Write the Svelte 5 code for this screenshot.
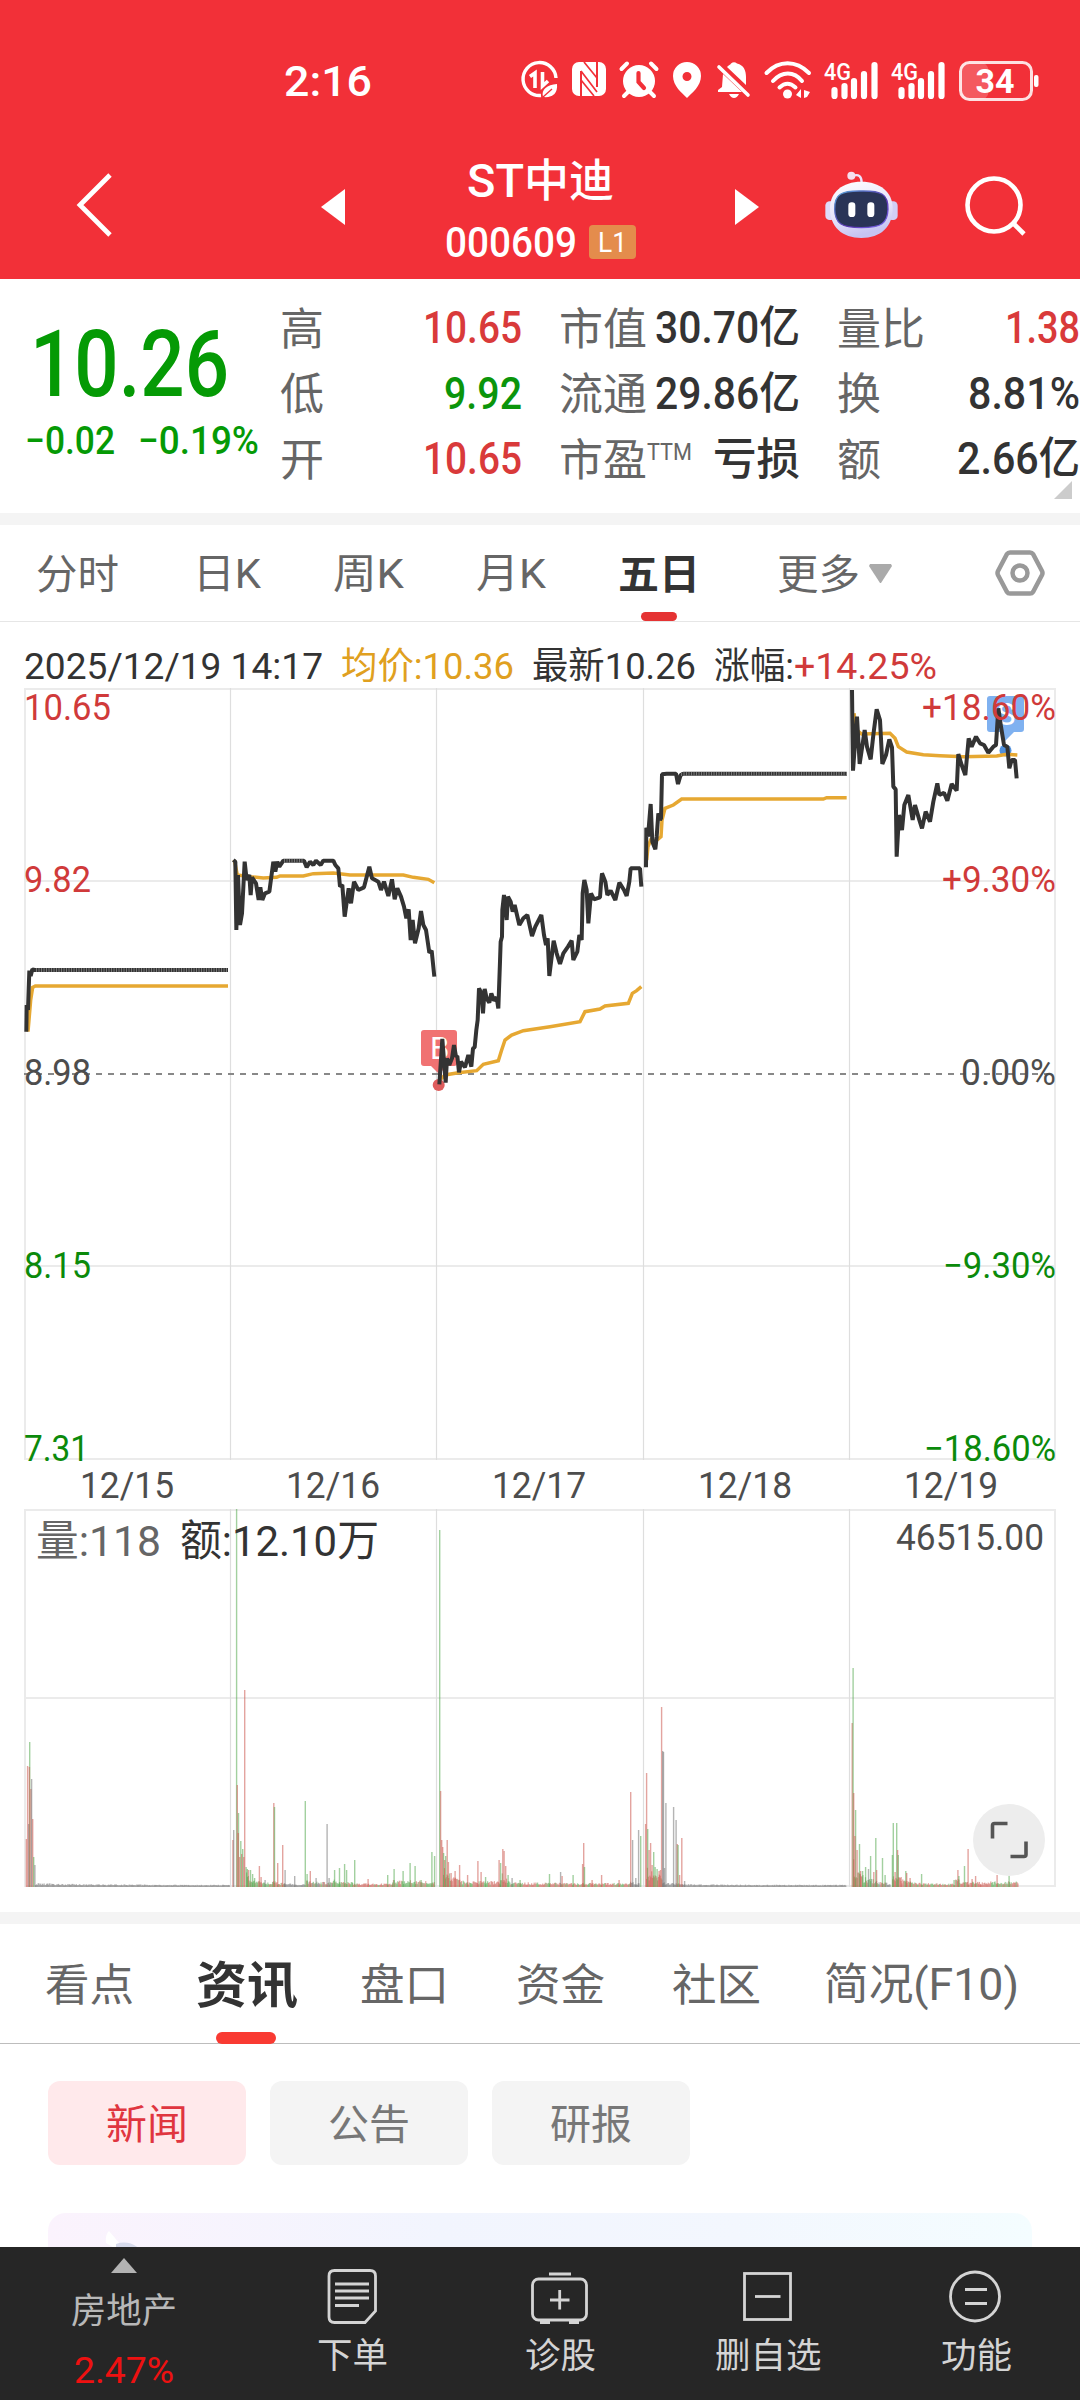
<script>
  const stats = [
    [
      { label: '高', value: '10.65', w: 99, tone: 'up' },
      { label: '低', value: '9.92', w: 78, tone: 'down' },
      { label: '开', value: '10.65', w: 99, tone: 'up' },
    ],
    [
      { label: '市值', value: '30.70亿', w: 145, tone: 'ink' },
      { label: '流通', value: '29.86亿', w: 145, tone: 'ink' },
      { label: '市盈', sup: 'TTM', value: '亏损', w: 87, tone: 'ink' },
    ],
    [
      { label: '量比', value: '1.38', w: 75, tone: 'up' },
      { label: '换', value: '8.81%', w: 112, tone: 'ink' },
      { label: '额', value: '2.66亿', w: 123, tone: 'ink' },
    ],
  ];

  const periods = [
    { text: '分时', w: 83, at: 'p0' },
    { text: '日K', w: 68, at: 'p1' },
    { text: '周K', w: 71, at: 'p2' },
    { text: '月K', w: 70, at: 'p3' },
    { text: '五日', w: 82, at: 'p4', active: true },
    { text: '更多', w: 83, at: 'p5', more: true },
  ];

  const sections = [
    { text: '看点', w: 89 },
    { text: '资讯', w: 102, active: true },
    { text: '盘口', w: 89 },
    { text: '资金', w: 89 },
    { text: '社区', w: 89 },
    { text: '简况(F10)', w: 195 },
  ];

  const chips = [{ text: '新闻', active: true }, { text: '公告' }, { text: '研报' }];
  const actions = [
    { text: '下单', icon: 'order' },
    { text: '诊股', icon: 'diagnose' },
    { text: '删自选', icon: 'remove' },
    { text: '功能', icon: 'menu' },
  ];

  // Intraday series, each in thirds of a pixel from its own origin
  const third = 1 / 3;
  const days = [
    {
      x: 0, y: 630,
      price: '79,1205 80,1125 84,1140 88,1022 92,1038 97,1018 104,1020 684,1020',
      avg: '84,1205 92,1110 98,1072 106,1068 684,1068',
    },
    {
      x: 0, y: 630,
      price: '700,690 706,695 709,900 714,735 720,885 726,850 734,695 740,750 748,735 752,795 756,742 768,760 776,810 781,772 787,810 795,790 808,785 820,695 826,725 832,695 838,710 850,692 912,692 920,712 930,695 940,705 948,692 962,705 970,692 1000,692 1006,705 1015,715 1020,770 1027,765 1034,860 1046,775 1053,820 1062,755 1075,780 1092,772 1108,710 1116,745 1135,755 1143,780 1152,755 1165,798 1176,748 1184,808 1192,775 1203,800 1212,830 1219,865 1226,838 1232,930 1238,870 1245,940 1256,895 1263,843 1270,885 1278,900 1288,968 1295,962 1303,1040',
      avg: '703,690 712,735 750,740 790,744 830,742 840,738 910,738 940,731 1000,729 1050,735 1210,735 1240,742 1285,748 1303,758',
    },
    {
      x: 400, y: 660,
      price: '118,1273 127,1137 137,1268 141,1195 148,1215 156,1195 162,1155 168,1190 172,1188 177,1237 183,1205 195,1222 205,1185 214,1220 219,1165 224,1162 229,1110 233,1080 237,985 245,1000 249,1060 254,987 260,1015 268,1028 274,1000 282,1022 290,1012 295,1045 300,905 302,845 306,830 307,750 312,705 320,780 324,710 332,725 338,755 344,735 358,795 370,775 382,765 396,828 406,800 424,765 432,825 438,855 443,835 448,948 461,842 470,880 480,912 490,880 504,860 515,842 520,900 532,875 538,825 545,840 548,700 553,660 560,690 565,790 573,700 582,718 600,712 603,670 606,640 616,665 622,705 632,692 646,720 658,668 672,690 680,708 688,665 692,625 720,625 724,680',
      avg: '122,1258 135,1245 175,1238 230,1232 250,1213 295,1202 305,1170 315,1140 335,1125 370,1112 450,1100 540,1085 555,1055 600,1047 615,1038 685,1030 697,1000 710,992 724,980',
    },
    {
      x: 400, y: 660,
      price: '738,622 739,503 744,530 752,432 757,545 766,568 770,530 775,460 780,480 783,475 786,343 800,341 828,341 834,372 842,345 850,341 1340,341',
      avg: '740,600 744,560 752,540 765,545 783,530 786,480 795,445 820,435 845,417 1270,417 1280,413 1340,413',
    },
    {
      x: 780, y: 630,
      price: '216,180 219,422 231,260 239,402 254,300 261,350 272,388 280,315 290,238 300,270 307,402 318,375 328,328 336,352 340,470 347,478 350,680 357,555 366,600 373,525 385,495 398,570 405,525 418,570 426,595 437,545 450,575 460,515 472,460 478,495 492,488 502,512 515,462 530,482 535,372 545,405 556,435 566,325 575,350 588,320 600,340 612,345 625,368 640,350 648,345 655,235 663,290 672,345 682,350 688,415 695,390 705,390 710,445',
      avg: '222,250 230,300 245,312 330,310 345,325 355,350 380,366 430,374 480,377 550,380 650,378 680,373 712,375',
    },
  ];
  const flats = [[36, 227, 970], [284, 303, 861], [681, 847, 774]];

  // Volume bars: [x, height, colour]; r = up, g = down, k = unchanged
  const peaks = [
    [26.3, 48, 'r'], [27.5, 121, 'r'], [28.6, 63, 'k'], [29.6, 145, 'g'], [29.3, 120, 'r'], [30.8, 98, 'r'], [31.5, 108, 'k'], [32.6, 68, 'r'], [33.6, 30, 'g'], [34.8, 22, 'k'],
    [232.8, 47, 'r'], [233.6, 57, 'k'], [236.5, 378, 'g'], [237.2, 102, 'r'], [238.4, 74, 'g'], [238.2, 54, 'r'], [239.6, 30, 'r'], [240.7, 46, 'g'], [241.6, 33, 'r'], [242.6, 38, 'g'], [243.7, 30, 'r'],
    [244.6, 197, 'r'], [246, 20, 'g'], [247.2, 18, 'g'], [248.4, 17, 'r'], [250.4, 17, 'g'], [252.5, 13, 'g'], [254.5, 9, 'g'], [259.3, 21, 'r'], [261, 10, 'r'], [265, 7, 'k'],
    [273.7, 84, 'r'], [274.4, 80, 'g'], [277.6, 24, 'r'], [282.6, 42, 'r'], [285, 17, 'k'], [294.6, 11, 'k'], [305.2, 86, 'g'], [307, 13, 'g'], [310.2, 16, 'r'], [316, 9, 'k'], [327, 63, 'k'], [329, 9, 'k'],
    [334.5, 17, 'g'], [339.4, 19, 'g'], [344.5, 23, 'g'], [346.5, 17, 'g'], [354.6, 27, 'g'], [368, 8, 'r'], [387.6, 12, 'g'], [394, 18, 'g'], [403, 16, 'g'], [410, 24, 'g'], [415, 21, 'g'], [421, 7, 'g'], [431.8, 35, 'g'], [434.5, 31, 'g'],
    [439.6, 357, 'g'], [440.5, 96, 'r'], [441.6, 47, 'r'], [442.6, 40, 'r'], [443.5, 34, 'g'], [444.5, 27, 'r'], [445.6, 31, 'g'], [447.1, 47, 'r'], [448.3, 25, 'r'], [451, 14, 'r'], [455, 16, 'r'], [459.5, 22, 'r'], [467.5, 12, 'r'],
    [477.8, 26, 'r'], [481, 15, 'r'], [485.5, 10, 'g'], [499, 27, 'r'], [500.5, 24, 'g'], [502.7, 38, 'r'], [504, 36, 'r'], [505.6, 21, 'r'], [508, 12, 'g'], [512, 9, 'k'], [520, 7, 'g'],
    [549.4, 13, 'g'], [560.5, 15, 'k'], [562, 11, 'r'], [573, 12, 'g'], [582.5, 23, 'r'], [583.6, 44, 'r'], [584.4, 20, 'g'], [592, 7, 'r'], [601.5, 12, 'r'], [619, 7, 'r'], [630.6, 95, 'r'], [632.5, 47, 'k'], [635.7, 9, 'k'], [638.5, 57, 'k'], [640.6, 51, 'g'],
    [645.5, 63, 'r'], [646.5, 114, 'r'], [647.6, 58, 'g'], [649, 37, 'r'], [650.5, 44, 'r'], [652, 22, 'r'], [653.6, 35, 'g'], [655, 20, 'g'], [657, 18, 'g'], [659, 16, 'r'], [660.4, 17, 'r'], [661.5, 180, 'r'], [662.6, 136, 'k'], [663.4, 135, 'k'], [665.8, 84, 'k'], [664.4, 19, 'k'],
    [673.5, 80, 'k'], [676, 67, 'k'], [677.2, 43, 'r'], [678, 42, 'g'], [679.5, 12, 'r'], [681.7, 49, 'r'], [684.5, 6, 'k'],
    [852.1, 164, 'r'], [853, 219, 'g'], [853.6, 94, 'r'], [855.5, 77, 'g'], [854.8, 51, 'r'], [857, 37, 'r'], [859.4, 43, 'g'], [860.5, 16, 'r'], [862.5, 16, 'g'], [865.5, 20, 'g'], [868.4, 18, 'k'], [870.5, 31, 'g'], [873.7, 15, 'r'], [875.7, 49, 'g'], [876.5, 17, 'r'], [882.4, 29, 'g'], [885, 12, 'g'],
    [893.2, 64, 'g'], [892.3, 32, 'g'], [896.6, 64, 'g'], [897.5, 37, 'r'], [898.2, 32, 'g'], [895, 15, 'r'], [901, 10, 'r'], [905.7, 16, 'g'], [906.6, 14, 'r'], [910, 9, 'r'], [921.5, 13, 'g'], [954, 7, 'g'], [957.8, 17, 'r'], [958.8, 11, 'g'], [964.4, 21, 'g'], [968, 38, 'r'], [972, 8, 'r'], [975.5, 11, 'r'], [997, 12, 'r'], [1009, 11, 'g'],
  ];

  let seed = 19;
  const rand = () => (seed = (seed * 16807) % 2147483647) / 2147483647;
  // Low trading between the peaks: [from, to, starting height, base height, colours]
  const floors = [
    [35, 229, 3, 1.2, 'kkk'], [246, 272, 16, 3, 'ggr'], [272, 284, 7, 3, 'rrg'], [284, 305, 3, 2, 'kk'], [306, 332, 6, 4, 'kgr'], [332, 352, 9, 4, 'ggr'], [352, 392, 3, 2.5, 'rrg'], [392, 434, 6, 6, 'ggr'],
    [443, 470, 24, 4, 'rrg'], [470, 500, 5, 5, 'rrg'], [500, 520, 16, 3, 'rgg'], [520, 630, 4, 3, 'rrg'], [630, 639, 5, 4, 'k'],
    [646, 662, 22, 12, 'rrg'], [662, 682, 4, 3, 'k'], [682, 846, 2, 1.2, 'k'], [853, 870, 30, 8, 'rrg'], [870, 890, 10, 3, 'rgk'], [892, 910, 16, 6, 'rrg'], [910, 955, 4, 2.5, 'rrg'], [955, 980, 8, 4, 'rrg'], [980, 1018, 4, 5, 'rgr'],
  ];
  const low = floors.flatMap(([a, b, h0, h1, c]) => {
    const out = [];
    for (let x = a; x < b; x += 0.85) {
      const decay = Math.exp((-3.5 * (x - a)) / (b - a));
      const h = 1 + (h1 + (h0 - h1) * decay) * (0.3 + rand() * 0.7);
      out.push([x, h, c[Math.floor(rand() * c.length)]]);
    }
    return out;
  });

  const gridX = [230, 436, 643, 849];
  const leftScale = [['10.65', 720, 87, 'up'], ['9.82', 892, 67, 'up'], ['8.98', 1085, 67, 'mid'], ['8.15', 1278, 67, 'down'], ['7.31', 1461, 65, 'down']];
  const rightScale = [['+18.60%', 720, 134, 'up'], ['+9.30%', 892, 114, 'up'], ['0.00%', 1085, 95, 'mid'], ['−9.30%', 1278, 113, 'down'], ['−18.60%', 1461, 132, 'down']];
  const dates = ['12/15', '12/16', '12/17', '12/18', '12/19'];

  const isHan = (s) => /^[\u4e00-\u9fff]+$/.test(s);
  const boxHeight = (s, size) => Math.round(size * (isHan(s) ? 0.76 : 0.711));
</script>

{#snippet fit(text, w, size)}
  {@const h = boxHeight(text, size)}
  <svg class="fit" width={w} height={h}>
    <text x="0" y={h} font-size={size} textLength={w} lengthAdjust="spacingAndGlyphs">{text}</text>
  </svg>
{/snippet}

{#snippet signal()}
  <svg width="56" height="38" viewBox="0 0 56 38">
    <text class="g4" x="0" y="19" font-size="24" textLength="27" lengthAdjust="spacingAndGlyphs">4G</text>
    <path d="M10.500 29V35M20.500 25V35M30 20V35M40 13V35M50.500 4V35" stroke="#fff" stroke-width="6.200" stroke-linecap="round" />
  </svg>
{/snippet}

<main class="page">
  <header>
    <div class="status">
      <div class="clock">{@render fit('2:16', 88, 42)}</div>
      <div class="tray">
        <svg class="saver" width="38" height="38" viewBox="0 0 38 38" fill="none" stroke="#fff">
          <path d="M35 17A16.500 16.500 0 1 0 20 34.500" stroke-width="3.400" />
          <path d="M9 15.500L14 12V27M21.500 11V25L27 20" stroke-width="3.600" />
          <path d="M22 36C20 28 26 24 36 23C37 33 31 37 22 36Z" fill="#fff" stroke="none" />
          <path d="M22 36L31 28" stroke="#f23038" stroke-width="1.400" />
        </svg>
        <svg class="nfc" width="35" height="36" viewBox="0 0 35 36">
          <rect x="0" y="1" width="34" height="34" rx="7" fill="#fff" />
          <path d="M9 10V35M25 1V26" stroke="#f23038" stroke-width="2" />
          <path d="M9 10L25 31M9 19L22 35M12 1L25 17" stroke="#f23038" stroke-width="1.700" />
        </svg>
        <svg class="alarm" width="40" height="38" viewBox="0 0 40 38" fill="none" stroke-linecap="round">
          <circle cx="20" cy="20" r="16" fill="#fff" />
          <path d="M2.500 8L8 2.500M37.500 8L32 2.500M5 35L10 30M35 35L30 30" stroke="#fff" stroke-width="4" />
          <path d="M19.500 12V21L25 27" stroke="#f23038" stroke-width="4.200" />
        </svg>
        <svg class="pin" width="30" height="38" viewBox="0 0 30 38">
          <path d="M15 1A14 14 0 0 0 1 15C1 25 10 32 15 37C20 32 29 25 29 15A14 14 0 0 0 15 1ZM15 11A4.500 4.500 0 1 1 15 20A4.500 4.500 0 1 1 15 11Z" fill="#fff" fill-rule="evenodd" />
        </svg>
        <svg class="bell" width="34" height="38" viewBox="0 0 34 38">
          <path d="M6 13L25 31H1V29L5 26ZM10 6C12 4 13 4 14 2.500Q17 0 20 2.500C27 4 29 10 29 16V24Z" fill="#fff" />
          <path d="M12 33H22Q20 37 17 37T12 33Z" fill="#fff" />
          <path d="M2 6L31 34" stroke="#fff" stroke-width="3.600" stroke-linecap="round" />
        </svg>
        <svg class="wifi" width="48" height="38" viewBox="0 0 48 38" fill="none" stroke="#fff" stroke-width="4" stroke-linecap="round">
          <path d="M2.500 12C15-1 32-1 45 12M9 20C18 10 30 10 38 20M15.500 26.500Q23.500 19 31.500 26.500" />
          <circle cx="23.500" cy="33" r="4.500" fill="#fff" stroke="none" />
          <path d="M32 34L37 28V37M40 37V29L46 31L43 36Z" fill="#fff" stroke="none" />
        </svg>
        {@render signal()}
        <span class="second">{@render signal()}</span>
        <svg class="battery" width="80" height="42" viewBox="0 0 80 42">
          <rect x="1.500" y="1.500" width="28" height="37" rx="8" fill="#fff" fill-opacity=".2" />
          <rect x="1.500" y="1.500" width="71" height="37" rx="9" fill="none" stroke="#fff" stroke-opacity=".85" stroke-width="3" />
          <rect x="75" y="14" width="4.500" height="12" rx="2" fill="#fff" />
          <text class="pct" x="16.500" y="32" font-size="34" textLength="39" lengthAdjust="spacingAndGlyphs">34</text>
        </svg>
      </div>
    </div>

    <div class="titlebar">
      <svg class="back" width="40" height="68" viewBox="0 0 40 68"><path d="M34 4L4 34L34 64" fill="none" stroke="#fff" stroke-width="4.800" /></svg>
      <svg class="prev" width="24" height="36" viewBox="0 0 24 36"><path d="M24 0V36L0 18Z" fill="#fff" /></svg>
      <div class="stock">
        <div class="name">{@render fit('ST', 57, 47)}{@render fit('中迪', 90, 45)}</div>
        <div class="code">{@render fit('000609', 132, 42)}<span class="level">{@render fit('L1', 29, 28)}</span></div>
      </div>
      <svg class="next" width="24" height="36" viewBox="0 0 24 36"><path d="M0 0V36L24 18Z" fill="#fff" /></svg>
      <svg class="robot" width="73" height="68" viewBox="74 31 219 204">
        <defs>
          <linearGradient id="shell" x1="0" y1="0" x2="0.300" y2="1"><stop offset="0" stop-color="#fff" /><stop offset="0.650" stop-color="#e6e2fa" /><stop offset="1" stop-color="#c6c4f2" /></linearGradient>
          <linearGradient id="rim" x1="0" y1="0" x2="1" y2="1"><stop offset="0" stop-color="#59a7d8" /><stop offset="0.600" stop-color="#5b34b0" /><stop offset="1" stop-color="#7c6cf2" /></linearGradient>
        </defs>
        <path d="M156 46C176 38 184 48 184 66" fill="none" stroke="#ece4fb" stroke-width="7" />
        <circle cx="153" cy="45" r="12" fill="#f6dfee" />
        <rect x="75" y="122" width="30" height="56" rx="13" fill="#dedafa" />
        <rect x="262" y="122" width="30" height="56" rx="13" fill="#d2cef6" />
        <path d="M183 63C240 63 276 95 277 140C278 200 240 232 183 232C126 232 88 200 89 140C90 95 126 63 183 63Z" fill="url(#shell)" />
        <path d="M183 91C243 90 264 100 263 146C262 188 243 201 183 201C123 201 104 188 103 146C102 100 123 90 183 91Z" fill="#2a3457" stroke="url(#rim)" stroke-width="4" />
        <rect x="144" y="125" width="21" height="44" rx="10" fill="#fff" />
        <rect x="201" y="125" width="21" height="44" rx="10" fill="#fff" />
      </svg>
      <svg class="search" width="62" height="62" viewBox="0 0 62 62" fill="none" stroke="#fff" stroke-width="4.600"><circle cx="29" cy="29" r="26.500" /><path d="M48 47L59 58" /></svg>
    </div>
  </header>

  <section class="quote">
    <div class="last">
      <div class="price">{@render fit('10.26', 199, 93)}</div>
      <div class="change">{@render fit('−0.02', 90, 39)}{@render fit('−0.19%', 121, 39)}</div>
    </div>
    {#each stats as column}
      <div class="column">
        {#each column as s}
          <div class="stat">
            <span class="label">
              {@render fit(s.label, s.label.length * 44, 44.500)}
              {#if s.sup}<span class="sup">{@render fit(s.sup, 45, 24)}</span>{/if}
            </span>
            <span class={s.tone}>{@render fit(s.value, s.w, 44)}</span>
          </div>
        {/each}
      </div>
    {/each}
    <svg class="corner" width="18" height="18" viewBox="0 0 18 18"><path d="M18 0V18H0Z" fill="#ccc" /></svg>
  </section>

  <nav class="periods">
    {#each periods as p}
      <div class="period {p.at}" class:active={p.active}>
        {@render fit(p.text, p.w, 41)}
        {#if p.more}<svg class="drop" width="23" height="19" viewBox="0 0 23 19"><path d="M1 0H22L23 2L12 19H11L0 2Z" fill="#aaa" /></svg>{/if}
      </div>
    {/each}
    <svg class="hex" width="50" height="46" viewBox="0 0 50 46" fill="none" stroke="#999" stroke-width="4.500"><path d="M15 2.500H35Q37 2.500 38 4L47 21Q48 23 47 25L38 42Q37 43.500 35 43.500H15Q13 43.500 12 42L3 25Q2 23 3 21L12 4Q13 2.500 15 2.500Z" /><circle cx="25" cy="23" r="7.500" /></svg>
  </nav>

  <section class="chart">
    <svg class="plot" width="1080" height="1290" viewBox="0 622 1080 1290">
      <g class="info" font-size="37">
        <text x="24" y="679" textLength="299" lengthAdjust="spacingAndGlyphs">2025/12/19 14:17</text>
        <text class="gold" x="341" y="679" textLength="173" lengthAdjust="spacingAndGlyphs">均价:10.36</text>
        <text x="532" y="679" textLength="164" lengthAdjust="spacingAndGlyphs">最新10.26</text>
        <text x="714" y="679" textLength="80" lengthAdjust="spacingAndGlyphs">涨幅:</text>
        <text class="up" x="794" y="679" textLength="143" lengthAdjust="spacingAndGlyphs">+14.25%</text>
      </g>

      <g class="grid">
        <path d="M24 689H1056M24 881H1056M24 1266H1056M24 1459H1056M25 688V1460M1055 688V1460" />
        <path d="M24 1510H1056M24 1698H1056M24 1886H1056M25 1509V1887M1055 1509V1887" />
        {#each gridX as x}<path class="thin" d="M{x + 0.5} 688V1460M{x + 0.5} 1509V1887" />{/each}
      </g>
      <path d="M24 1074H1056" stroke="#888" stroke-width="2" stroke-dasharray="6 6" />

      <g>
        <path d="M424 1030H454Q457 1030 457 1033V1063Q457 1066 454 1066H447L439 1074L431 1066H424Q421 1066 421 1063V1033Q421 1030 424 1030Z" fill="#f07272" />
        <text class="tag" x="430" y="1059" font-size="31">B</text>
        <circle cx="438.700" cy="1085" r="6" fill="#de5c5c" />
        <path d="M990 696H1021Q1024 696 1024 699V729Q1024 732 1021 732H1014L1003 743V732H990Q987 732 987 729V699Q987 696 990 696Z" fill="#7fb1f0" />
        <text class="tag" x="997" y="725" font-size="31">S</text>
        <circle cx="1005.500" cy="750.500" r="6" fill="#5090dc" />
      </g>

      {#each days as d}
        <g transform="translate({d.x} {d.y}) scale({third})" fill="none">
          <polyline points={d.avg} stroke="#e6a832" stroke-width="10.500" />
          <polyline points={d.price} stroke="#333" stroke-width="12" stroke-linejoin="bevel" />
        </g>
      {/each}
      {#each flats as [a, b, y]}<path d="M{a} {y}H{b}" stroke="#777" stroke-width="4" stroke-dasharray="1 1.500" />{/each}

      <g font-size="36">
        {#each leftScale as [t, y, w, tone]}<text class={tone} x="24" {y} textLength={w} lengthAdjust="spacingAndGlyphs">{t}</text>{/each}
        {#each rightScale as [t, y, w, tone]}<text class={tone} x={1056 - w} {y} textLength={w} lengthAdjust="spacingAndGlyphs">{t}</text>{/each}
        {#each dates as t, i}<text class="mid" x={80 + i * 206} y="1498" textLength="94" lengthAdjust="spacingAndGlyphs">{t}</text>{/each}
        <text class="mid" x="896" y="1550" textLength="148" lengthAdjust="spacingAndGlyphs">46515.00</text>
      </g>

      {#each low as [x, h, c]}<rect class="bar {c}" {x} y={1887 - h} width="1.200" height={h} />{/each}
      {#each peaks as [x, h, c]}<rect class="bar {c}" x={x - 0.6} y={1887 - h} width="1.400" height={h} />{/each}

      <g font-size="43">
        <text class="soft" x="36" y="1556" textLength="125" lengthAdjust="spacingAndGlyphs">量:118</text>
        <text class="ink" x="180" y="1556" textLength="199" lengthAdjust="spacingAndGlyphs">额:12.10万</text>
      </g>

      <circle cx="1009" cy="1840" r="36" fill="#ededed" />
      <path d="M1007.500 1823.500H994.500Q992.500 1823.500 992.500 1825.500V1838.500M1010.500 1856.500H1024Q1026 1856.500 1026 1854.500V1841.500" fill="none" stroke="#555" stroke-width="3.600" />
    </svg>
  </section>

  <nav class="sections">
    {#each sections as s}
      <div class="section" class:active={s.active}>{@render fit(s.text, s.w, s.active ? 50 : 44)}</div>
    {/each}
  </nav>

  <div class="chips">
    {#each chips as c}<div class="chip" class:active={c.active}>{@render fit(c.text, 82, 41)}</div>{/each}
  </div>

  <div class="card">
    <svg width="36" height="34" viewBox="0 0 36 34"><path d="M3 0L14 13Q16 17 12 19L0 12Q-1 4 3 0Z" fill="#fff" /><path d="M10 13Q24 8 36 20H10Z" fill="#d7daec" /></svg>
  </div>

  <footer>
    <div class="sector">
      <svg width="26" height="15" viewBox="0 0 26 15"><path d="M13 0L26 15H0Z" fill="#b3b3b3" /></svg>
      <div class="sname">{@render fit('房地产', 106, 35.5)}</div>
      <div class="spct">{@render fit('2.47%', 100, 37)}</div>
    </div>
    {#each actions as a}
      <div class="action">
        <svg width="60" height="58" viewBox="0 0 60 58" fill="none" stroke="#d4d4d4" stroke-width="2.800">
          {#if a.icon === 'order'}
            <path d="M12.500 3.500H48Q53.500 3.500 53.500 9V44L43 55.500H12.500Q7 55.500 7 50V9Q7 3.500 12.500 3.500ZM13 17H47M13 24H47M13 31H47M13 38.500H37" />
          {:else if a.icon === 'diagnose'}
            <rect x="2.500" y="12" width="54" height="41" rx="6" /><path d="M19 7H41M20 33H39.500M29.700 23V42.500M10 55.500H20M39 55.500H49" />
          {:else if a.icon === 'remove'}
            <rect x="6.500" y="6.500" width="46" height="46" /><path d="M17 29.500H42.500" />
          {:else}
            <circle cx="29" cy="29.500" r="24.500" /><path d="M19 22.500H41M19 36.500H41" />
          {/if}
        </svg>
        {@render fit(a.text, a.text.length * 35.5, 35.5)}
      </div>
    {/each}
  </footer>
</main>

<style>
  :global(body) { margin: 0; background: #fff; }
  .page { width: 1080px; height: 2400px; display: flex; flex-direction: column; overflow: hidden; background: #fff; font-family: Roboto, "Noto Sans CJK SC", sans-serif; color: #333; }
  svg { display: block; flex: none; overflow: visible; }
  .fit { fill: currentColor; }
  header { background: #f23038; color: #fff; height: 279px; }
  .status { height: 130px; display: flex; }
  .clock { padding: 66px 0 0 284px; font-weight: 500; }
  .tray { display: flex; padding-top: 61px; margin-left: 149px; }
  .tray svg { fill: none; }
  .tray text { fill: #fff; font-weight: 500; }
  .nfc { margin-left: 13px; }
  .alarm { margin-left: 12px; }
  .pin { margin-left: 13px; }
  .bell { margin-left: 15px; }
  .wifi { margin-left: 13px; margin-right: 12px; }
  .second { margin: 0 12px 0 11px; }
  .tray .pct { font-weight: 700; }
  .titlebar { height: 149px; display: flex; align-items: center; }
  .back { margin-left: 76px; }
  .prev { margin: 5px 0 0 205px; }
  .stock { width: 390px; display: flex; flex-direction: column; align-items: center; padding-top: 13px; }
  .name { display: flex; align-items: center; font-weight: 500; }
  .code { display: flex; align-items: center; gap: 12px; margin-top: 28px; font-weight: 500; }
  .level { display: flex; align-items: center; justify-content: center; width: 47px; height: 34px; border-radius: 4px; background: #e48c4c; font-weight: 400; }
  .next { margin-top: 5px; }
  .robot { margin-left: 66px; }
  .search { margin: 4px 0 0 67px; }

  .quote { position: relative; height: 234px; display: grid; grid-template-columns: 280px 242px 278px 280px; }
  .column { padding-top: 16px; font-weight: 500; }
  .column + .column { padding-left: 37px; }
  .stat { height: 65.500px; display: flex; align-items: center; justify-content: space-between; }
  .label { display: flex; color: #666; font-weight: 400; }
  .sup { padding-top: 1px; }
  .last { color: #059a05; font-weight: 500; }
  .price { padding: 51px 0 0 30px; }
  .change { display: flex; gap: 23px; padding: 30px 0 0 25px; }
  .up { color: #d93a3a; fill: #d03a3a; }
  .down { color: #0b950b; fill: #0b8a0b; }
  .ink { color: #333; fill: #333; }
  .mid { fill: #4d4d4d; }
  .soft { fill: #666; }
  .gold { fill: #e0a020; }
  .corner { position: absolute; right: 8px; bottom: 14px; }

  .periods { height: 96px; border-top: 12px solid #f4f4f4; border-bottom: 1px solid #e6e6e6; box-sizing: content-box; display: flex; align-items: center; color: #666; }
  .period { position: relative; display: flex; align-items: center; height: 96px; }
  .period.active { color: #333; font-weight: 700; }
  .period.active::after { content: ''; position: absolute; left: 23px; bottom: 0; width: 36px; height: 9px; border-radius: 4.500px; background: #e53333; }
  .p0 { margin-left: 36px; }
  .p1 { margin-left: 74px; }
  .p2 { margin-left: 72px; }
  .p3 { margin-left: 72px; }
  .p4 { margin-left: 72px; }
  .p5 { margin-left: 77px; }
  .drop { margin-left: 9px; }
  .hex { margin-left: 103px; }

  .chart { height: 1290px; }
  .info { fill: #333; }
  .info .up { fill: #d03a3a; }
  .grid path { stroke: #ebebeb; stroke-width: 2; }
  .grid .thin { stroke: #dedede; stroke-width: 1.200; }
  .tag { fill: #fff; }
  .bar { fill-opacity: .55; }
  .r { fill: #cc5a50; }
  .g { fill: #55aa50; }
  .k { fill: #777; }

  .sections { height: 119px; border-top: 12px solid #f4f4f4; border-bottom: 1px solid #bdbdbd; display: flex; align-items: center; gap: 67px; padding-left: 45px; color: #666; }
  .section { position: relative; height: 119px; display: flex; align-items: center; padding-top: 1px; box-sizing: border-box; }
  .section:last-child { margin-left: -4px; }
  .section.active { margin: 0 -5px; color: #333; font-weight: 700; }
  .section.active::after { content: ''; position: absolute; left: 20px; bottom: -1px; width: 60px; height: 12px; border-radius: 6px; background: #f93a32; }
  .chips { display: flex; gap: 24px; padding: 37px 0 0 48px; }
  .chip { width: 198px; height: 84px; border-radius: 12px; display: flex; align-items: center; justify-content: center; background: #f4f4f4; color: #777; }
  .chip.active { background: #ffe9eb; color: #e0353f; }
  .card { margin: 48px 48px 0; height: 34px; border-radius: 18px 18px 0 0; background: linear-gradient(90deg, #fbf3fd, #f2f5fe 40%, #f3f7fe 70%, #f4fdff); overflow: hidden; }
  .card svg { margin: 18px 0 0 58px; }
  footer { height: 153px; background: #262626; display: flex; color: #d4d4d4; }
  .sector { width: 248px; display: flex; flex-direction: column; align-items: center; padding-top: 11px; }
  .sname { margin-top: 23px; color: #b8b8b8; }
  .spct { margin-top: 34px; color: #ee1111; }
  .action { width: 208px; display: flex; flex-direction: column; align-items: center; gap: 16px; padding-top: 20px; }
</style>
